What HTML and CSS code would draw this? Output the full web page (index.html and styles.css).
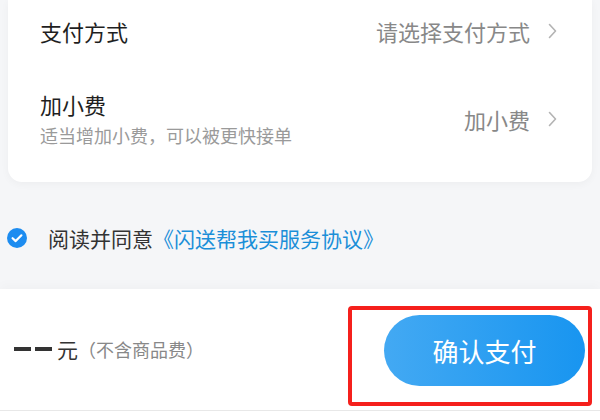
FILE: index.html
```html
<!DOCTYPE html>
<html lang="zh-CN">
<head>
    <meta charset="UTF-8">
    <meta name="viewport" content="width=device-width, initial-scale=1.0">
    <title>确认支付</title>
    <link rel="stylesheet" href="styles.css">
</head>
<body>
    <div class="page">
        <div class="card">
            <div class="row pay-row">
                <span class="label">支付方式</span>
                <span class="value">请选择支付方式
                    <svg class="arrow" width="9" height="16" viewBox="0 0 9 16"><polyline points="1.5,1.5 7.5,8 1.5,14.5" fill="none" stroke="#b3b3b3" stroke-width="1.6" stroke-linecap="round" stroke-linejoin="round"/></svg>
                </span>
            </div>
            <div class="row fee-row">
                <div class="fee-text">
                    <div class="label">加小费</div>
                    <div class="hint">适当增加小费，可以被更快接单</div>
                </div>
                <span class="value">加小费
                    <svg class="arrow" width="9" height="16" viewBox="0 0 9 16"><polyline points="1.5,1.5 7.5,8 1.5,14.5" fill="none" stroke="#b3b3b3" stroke-width="1.6" stroke-linecap="round" stroke-linejoin="round"/></svg>
                </span>
            </div>
        </div>

        <div class="agree">
            <svg class="check" width="20" height="20" viewBox="0 0 20 20">
                <circle cx="10" cy="10" r="10" fill="#1d8cf0"/>
                <polyline points="5.6,10.2 8.7,13.1 14.4,7.3" fill="none" stroke="#fff" stroke-width="2.2" stroke-linecap="round" stroke-linejoin="round"/>
            </svg>
            <span>阅读并同意</span><a class="link" href="#">《闪送帮我买服务协议》</a>
        </div>

        <div class="footer">
            <div class="bar">
                <div class="price">
                    <span class="dash"></span><span class="dash"></span>
                    <span class="unit">元</span>
                    <span class="note">（不含商品费）</span>
                </div>
                <button class="pay-btn">确认支付</button>
            </div>
            <div class="mark"></div>
        </div>
    </div>
</body>
</html>
```

FILE: styles.css
```css
body {
    margin: 0;
    padding: 0;
    background-color: #f5f6f8;
    font-family: "Noto Sans CJK SC", "Noto Sans", sans-serif;
    color: #222;
}
.page {
    width: 600px;
    height: 420px;
    overflow: hidden;
}
.card {
    margin: 0 8px;
    padding: 0 35px 0 32px;
    background-color: #fff;
    border-radius: 0 0 14px 14px;
    box-shadow: 0 2px 8px rgba(0, 0, 0, 0.04);
}
.row {
    display: flex;
    align-items: center;
    justify-content: space-between;
}
.pay-row {
    height: 62px;
}
.fee-row {
    padding: 28px 0 35px;
}
.label {
    font-size: 22px;
    line-height: 28px;
    color: #1f1f1f;
}
.hint {
    margin-top: 5px;
    font-size: 18px;
    line-height: 24px;
    color: #9a9a9a;
}
.value {
    display: flex;
    align-items: center;
    font-size: 22px;
    line-height: 28px;
    color: #888;
}
.arrow {
    margin-left: 18px;
}
.agree {
    display: flex;
    align-items: center;
    height: 30px;
    margin-top: 41px;
    padding-left: 7px;
    font-size: 21px;
    color: #333;
}
.check {
    margin-right: 21px;
}
.link {
    color: #1b8fd8;
    text-decoration: none;
}
.footer {
    position: relative;
    margin-top: 36px;
    height: 140px;
    background-color: #fff;
    box-shadow: 0 -4px 10px rgba(0, 0, 0, 0.025);
}
.bar {
    display: flex;
    align-items: center;
    justify-content: space-between;
    height: 121px;
    padding: 0 15px 0 14px;
    border-bottom: 1px solid #e8e8e8;
}
.price {
    display: flex;
    align-items: center;
    padding-bottom: 2px;
}
.dash {
    display: inline-block;
    width: 17px;
    height: 4px;
    margin-right: 4px;
    background-color: #333;
}
.unit {
    margin-left: 1px;
    font-size: 21px;
    color: #333;
}
.note {
    font-size: 18px;
    color: #888;
}
.pay-btn {
    width: 201px;
    height: 71px;
    border: none;
    border-radius: 36px;
    background: linear-gradient(90deg, #43a9f3, #1895f0);
    color: #fff;
    font-family: inherit;
    font-size: 26px;
    margin-top: 1px;
}
.mark {
    position: absolute;
    left: 348px;
    top: 17px;
    width: 244px;
    height: 100px;
    box-sizing: border-box;
    border: 4px solid #f5201c;
    border-radius: 4px;
}
```
